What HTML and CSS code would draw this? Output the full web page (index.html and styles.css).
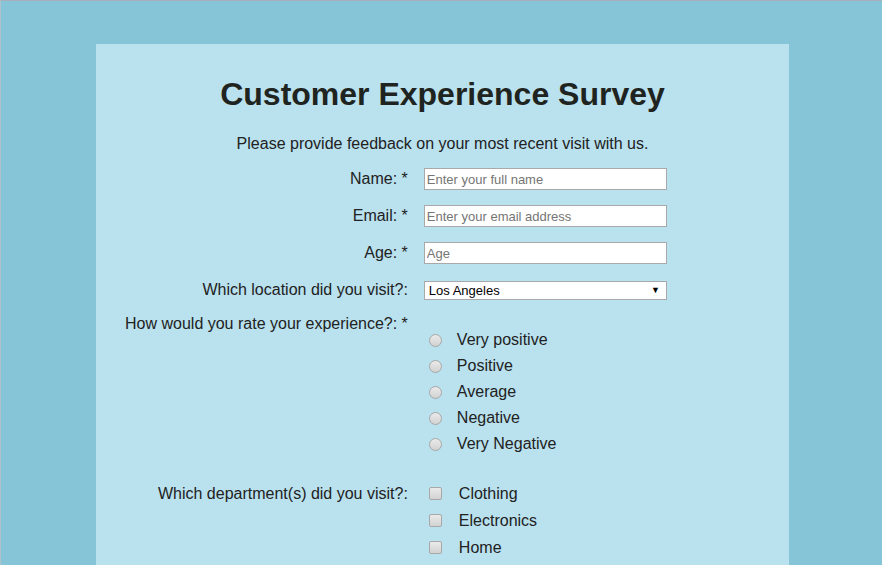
FILE: index.html
```html
<!DOCTYPE html>
<html>
<head>
<meta charset="utf-8">
<title>Customer Experience Survey</title>
<link rel="stylesheet" href="styles.css">
</head>
<body>
<div class="survey">
  <h1 class="title">Customer Experience Survey</h1>
  <p class="intro">Please provide feedback on your most recent visit with us.</p>
  <form class="form">
    <div class="row">
      <label class="label" for="name">Name: *</label>
      <div class="field"><input class="text" id="name" type="text" placeholder="Enter your full name"></div>
    </div>
    <div class="row">
      <label class="label" for="email">Email: *</label>
      <div class="field"><input class="text" id="email" type="email" placeholder="Enter your email address"></div>
    </div>
    <div class="row">
      <label class="label" for="age">Age: *</label>
      <div class="field"><input class="text" id="age" type="number" placeholder="Age"></div>
    </div>
    <div class="row row-select">
      <label class="label" for="loc">Which location did you visit?:</label>
      <div class="field">
        <div class="select">
          <span>Los Angeles</span>
          <span class="arrow">&#9660;</span>
        </div>
      </div>
    </div>
    <div class="row row-top">
      <div class="label">How would you rate your experience?: *</div>
      <ul class="choices radios">
        <li><span class="radio"></span><span>Very positive</span></li>
        <li><span class="radio"></span><span>Positive</span></li>
        <li><span class="radio"></span><span>Average</span></li>
        <li><span class="radio"></span><span>Negative</span></li>
        <li><span class="radio"></span><span>Very Negative</span></li>
      </ul>
    </div>
    <div class="row row-top">
      <div class="label">Which department(s) did you visit?:</div>
      <ul class="choices checks">
        <li><span class="check"></span><span>Clothing</span></li>
        <li><span class="check"></span><span>Electronics</span></li>
        <li><span class="check"></span><span>Home</span></li>
      </ul>
    </div>
  </form>
</div>
</body>
</html>
```
FILE: styles.css
```css
html {
  background: #86c5d7;
}
body {
  margin: 0;
  min-height: 564px;
  border-top: 1px solid #a9aebb;
  border-left: 1px solid #aec3cc;
  background: #86c5d7;
  font-family: "Liberation Sans", Arial, sans-serif;
  color: #222;
  overflow: hidden;
}
.survey {
  width: 693px;
  margin: 43px 0 0 95px;
  padding: 32px 0 40px;
  background: #b9e1ee;
  box-sizing: border-box;
  min-height: 600px;
}
.title {
  margin: 0;
  font-size: 32px;
  font-weight: bold;
  line-height: 37px;
  text-align: center;
  color: #1f2420;
}
.intro {
  margin: 22px 0 0;
  font-size: 16px;
  line-height: 18px;
  text-align: center;
}
.form {
  margin-top: 15px;
}
.row {
  display: flex;
  align-items: center;
  min-height: 22px;
  margin-bottom: 15px;
}
.row-select {
  margin-bottom: 14px;
}
.row-top {
  align-items: flex-start;
  margin-bottom: 28px;
}
.label {
  flex: 0 0 45%;
  text-align: right;
  font-size: 16px;
  line-height: 18px;
}
.field {
  margin-left: 16px;
}
.text {
  display: block;
  width: 243px;
  height: 22px;
  box-sizing: border-box;
  margin: 0;
  padding: 1px 2px;
  border: 1px solid #a9a9a9;
  background: #fff;
  font-family: "Liberation Sans", Arial, sans-serif;
  font-size: 13px;
  color: #222;
  outline: none;
}
.text::placeholder {
  color: #757575;
}
.text::-webkit-outer-spin-button,
.text::-webkit-inner-spin-button {
  -webkit-appearance: none;
  margin: 0;
}
.select {
  width: 243px;
  height: 19px;
  box-sizing: border-box;
  border: 1px solid #a9a9a9;
  background: #fff;
  display: flex;
  align-items: center;
  justify-content: space-between;
  padding: 0 6px 0 4px;
  font-size: 13px;
  color: #000;
}
.arrow {
  font-size: 9px;
}
.choices {
  list-style: none;
  margin: 0 0 0 21px;
  padding: 0;
  font-size: 16px;
}
.choices li {
  display: flex;
  align-items: center;
}
.radios {
  margin-top: 12px;
}
.radios li {
  height: 26px;
}
.checks li {
  height: 27px;
}
.checks {
  margin-top: -5px;
}
.radio,
.check {
  flex: 0 0 auto;
  width: 11px;
  height: 11px;
  border: 1px solid #a8a8a8;
  background: linear-gradient(#eaeaea, #d2d2d2);
}
.radio {
  border-radius: 50%;
  margin-right: 15px;
}
.check {
  border-radius: 2px;
  margin-right: 17px;
}
```
